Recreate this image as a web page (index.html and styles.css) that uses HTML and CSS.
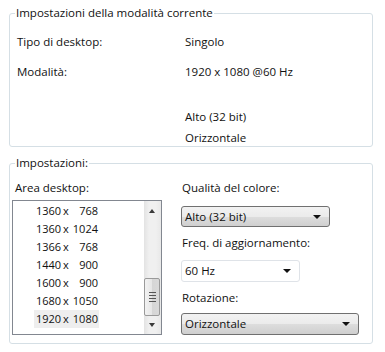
FILE: index.html
```html
<!DOCTYPE html>
<html lang="it">
<head>
    <meta charset="UTF-8">
    <title>Impostazioni schermo</title>
    <link rel="stylesheet" href="styles.css">
</head>
<body>
    <fieldset class="group current">
        <legend>Impostazioni della modalità corrente</legend>
        <div class="info-row first">
            <span class="info-label">Tipo di desktop:</span>
            <span class="info-value">Singolo</span>
        </div>
        <div class="info-row second">
            <span class="info-label">Modalità:</span>
            <span class="info-value">1920 x 1080 @60 Hz</span>
        </div>
        <div class="info-row third">
            <span class="info-label"></span>
            <span class="info-value">Alto (32 bit)</span>
        </div>
        <div class="info-row fourth">
            <span class="info-label"></span>
            <span class="info-value">Orizzontale</span>
        </div>
    </fieldset>

    <fieldset class="group settings">
        <legend>Impostazioni:</legend>
        <div class="settings-body">
            <div class="col-left">
                <div class="field-label area-label">Area desktop:</div>
                <div class="listbox">
                    <div class="list-items">
                        <div class="list-item"><span class="w">1360</span><span class="x">x</span><span class="h">768</span></div>
                        <div class="list-item"><span class="w">1360</span><span class="x">x</span><span class="h">1024</span></div>
                        <div class="list-item"><span class="w">1366</span><span class="x">x</span><span class="h">768</span></div>
                        <div class="list-item"><span class="w">1440</span><span class="x">x</span><span class="h">900</span></div>
                        <div class="list-item"><span class="w">1600</span><span class="x">x</span><span class="h">900</span></div>
                        <div class="list-item"><span class="w">1680</span><span class="x">x</span><span class="h">1050</span></div>
                        <div class="list-item selected"><span class="w">1920</span><span class="x">x</span><span class="h">1080</span></div>
                    </div>
                    <div class="scrollbar">
                        <div class="arrow up"></div>
                        <div class="track">
                            <div class="thumb">
                                <div class="grip"></div>
                                <div class="grip"></div>
                                <div class="grip"></div>
                                <div class="grip"></div>
                            </div>
                        </div>
                        <div class="arrow down"></div>
                    </div>
                </div>
            </div>
            <div class="col-right">
                <div class="field-label">Qualità del colore:</div>
                <div class="combo button-combo color-combo">
                    <span>Alto (32 bit)</span>
                    <span class="caret"></span>
                </div>
                <div class="field-label">Freq. di aggiornamento:</div>
                <div class="combo plain-combo rate-combo">
                    <span>60 Hz</span>
                    <span class="caret"></span>
                </div>
                <div class="field-label">Rotazione:</div>
                <div class="combo button-combo rotation-combo">
                    <span>Orizzontale</span>
                    <span class="caret"></span>
                </div>
            </div>
        </div>
    </fieldset>
</body>
</html>
```

FILE: styles.css
```css
body {
    margin: 0;
    background: #ffffff;
    font-family: 'Open Sans', 'Liberation Sans', sans-serif;
    font-size: 11.5px;
    line-height: 16px;
    color: #111111;
}

.group {
    margin: 0 0 0 9px;
    width: 364px;
    border: 1px solid #d5dfe5;
    border-radius: 3px;
    padding: 0;
    box-sizing: border-box;
}

.group legend {
    margin-left: 5px;
    padding: 0 1px;
    line-height: 16px;
}

.current {
    margin-top: 5px;
    height: 142px;
}

.info-row {
    display: flex;
    padding-left: 7px;
}

.info-label {
    width: 168px;
}

.first { margin-top: 13px; }
.second { margin-top: 14px; }
.third { margin-top: 29px; }
.fourth { margin-top: 5px; }

.settings {
    margin-top: 8px;
    height: 189px;
}

.settings-body {
    display: flex;
    padding: 9px 0 0 2px;
}

.col-left {
    width: 160px;
}

.field-label {
    height: 16px;
}

.area-label {
    padding-left: 3px;
}

.listbox {
    margin-top: 4px;
    width: 150px;
    height: 135px;
    border: 1px solid #828790;
    box-sizing: border-box;
    display: flex;
}

.list-items {
    flex: 1;
    padding-top: 1px;
}

.list-item {
    display: flex;
    height: 18px;
    line-height: 18px;
    font-size: 11px;
    margin-left: 21px;
    width: 65px;
    padding-left: 2px;
    box-sizing: border-box;
    white-space: nowrap;
}

.list-item .w {
    width: 25px;
}

.list-item .x {
    width: 10px;
    text-align: center;
}

.list-item .h {
    flex: 1;
    text-align: right;
    padding-right: 1px;
}

.list-item.selected {
    background: #eeeeee;
}

.scrollbar {
    width: 17px;
    display: flex;
    flex-direction: column;
    background: linear-gradient(to right, #e3e3e3, #f0f0f0 30%, #f0f0f0 70%, #e8e8e8);
}

.arrow {
    height: 17px;
    position: relative;
}

.arrow::after {
    content: '';
    position: absolute;
    left: 5px;
    width: 0;
    height: 0;
    border-left: 3.5px solid transparent;
    border-right: 3.5px solid transparent;
}

.arrow.up::after {
    top: 8px;
    border-bottom: 4px solid #3a3a3a;
}

.arrow.down::after {
    top: 6px;
    border-top: 4px solid #3a3a3a;
}

.track {
    flex: 1;
    display: flex;
    flex-direction: column;
    justify-content: flex-end;
    padding-bottom: 1px;
}

.thumb {
    height: 38px;
    margin: 0 1px 0 0;
    border: 1px solid #9a9a9a;
    border-radius: 2px;
    background: linear-gradient(to right, #f2f2f2, #e6e6e6 50%, #d6d6d6 51%, #d9d9d9);
    box-sizing: border-box;
    display: flex;
    flex-direction: column;
    justify-content: center;
    align-items: center;
    gap: 2px;
}

.grip {
    width: 7px;
    height: 1px;
    background: #555555;
}

.col-right {
    width: 190px;
    padding-left: 10px;
}

.combo {
    display: flex;
    justify-content: space-between;
    align-items: center;
    margin: 10px 0 8px -1px;
    padding: 0 8px 0 3px;
    box-sizing: border-box;
    border-radius: 3px;
}

.button-combo {
    border: 1px solid #707070;
    background: linear-gradient(to bottom, #f2f2f2, #ebebeb 50%, #dddddd 51%, #cfcfcf);
}

.plain-combo {
    border: 1px solid #dfe3e8;
    background: #ffffff;
}

.color-combo { width: 149px; height: 21px; }
.rate-combo { width: 119px; height: 22px; margin-top: 9px; }
.rotation-combo { width: 178px; height: 22px; margin-top: 7px; }

.caret {
    width: 0;
    height: 0;
    border-left: 4px solid transparent;
    border-right: 4px solid transparent;
    border-top: 4px solid #111111;
}
```
